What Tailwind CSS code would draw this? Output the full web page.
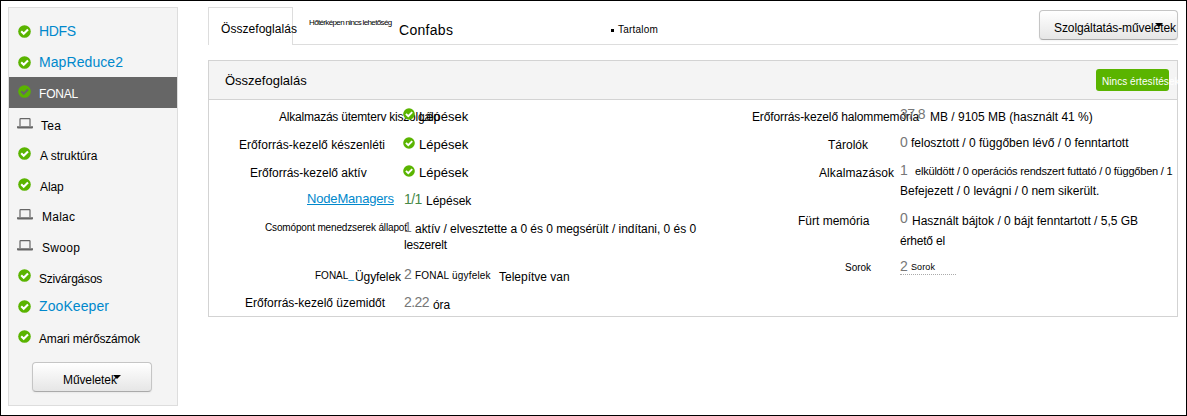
<!DOCTYPE html>
<html lang="hu">
<head>
<meta charset="utf-8">
<title>FONAL – Összefoglalás</title>
<script src="https://cdn.jsdelivr.net/npm/@tailwindcss/browser@4"></script>
</head>
<body class="bg-white">
<svg class="hidden">
  <symbol id="ok" viewBox="0 0 13 13"><circle cx="6.5" cy="6.5" r="6.3" fill="#5ab400"/><path d="M3.2 6.3l2.5 2.5 4.3-4.3" fill="none" stroke="currentColor" stroke-width="2.1"/></symbol>
  <symbol id="pc" viewBox="0 0 16 11"><path d="M3 8V1.2Q3 .6 3.600 .6H12.400Q13 .6 13 1.200V8" fill="#f4f4f4" stroke="#666" stroke-width="1.2"/><path d="M0 8.200H16V9.400Q16 10.400 15 10.400H1Q0 10.400 0 9.400Z" fill="#666"/></symbol>
</svg>
<div class="flex w-[1187px] h-[416px] border border-black pl-[7px] pt-[6px] overflow-hidden font-['Liberation_Sans',sans-serif] text-[12px] leading-[16px] text-black whitespace-nowrap">

  <nav class="w-[170px] h-[399px] shrink-0 border border-[#ddd] bg-[#f4f4f4] pt-2">
    <div class="h-[31px] flex items-start pl-[9px]"><svg class="size-[13px] mt-[9px] text-white"><use href="#ok"/></svg><a class="ml-2 mt-[7px] text-[14px] tracking-[-0.3px] text-[#0088cc]">HDFS</a></div>
    <div class="h-[30px] flex items-start pl-[9px]"><svg class="size-[13px] mt-[9px] text-white"><use href="#ok"/></svg><a class="ml-2 mt-[7px] text-[14px] tracking-[0.08px] text-[#0088cc]">MapReduce2</a></div>
    <div class="h-[31px] flex items-start pl-[9px] bg-[#666]"><svg class="size-[13px] mt-[8px] text-[#666]"><use href="#ok"/></svg><a class="ml-2 mt-[9px] tracking-[-0.2px] text-white">FONAL</a></div>
    <div class="h-[31px] flex items-start pl-2"><svg class="w-4 h-[11px] mt-[10px]"><use href="#pc"/></svg><a class="ml-2 mt-[10px] tracking-[0.3px]">Tea</a></div>
    <div class="h-[31px] flex items-start pl-[9px]"><svg class="size-[13px] mt-[8px] text-white"><use href="#ok"/></svg><a class="ml-[9px] mt-[9px] tracking-[0px]">A struktúra</a></div>
    <div class="h-[30px] flex items-start pl-[9px]"><svg class="size-[13px] mt-[8px] text-white"><use href="#ok"/></svg><a class="ml-[9px] mt-[9px] tracking-[-0.1px]">Alap</a></div>
    <div class="h-[31px] flex items-start pl-2"><svg class="w-4 h-[11px] mt-[9px]"><use href="#pc"/></svg><a class="ml-[9px] mt-[9px] tracking-[0.25px]">Malac</a></div>
    <div class="h-[31px] flex items-start pl-2"><svg class="w-4 h-[11px] mt-[9px]"><use href="#pc"/></svg><a class="ml-[9px] mt-[9px] tracking-[0.3px]">Swoop</a></div>
    <div class="h-[30px] flex items-start pl-[9px]"><svg class="size-[13px] mt-[7px] text-white"><use href="#ok"/></svg><a class="ml-2 mt-[9px] tracking-[-0.2px]">Szivárgásos</a></div>
    <div class="h-[30px] flex items-start pl-[9px]"><svg class="size-[13px] mt-[8px] text-white"><use href="#ok"/></svg><a class="ml-2 mt-[6px] text-[14px] tracking-[0.09px] text-[#0088cc]">ZooKeeper</a></div>
    <div class="h-[40px] flex items-start pl-[9px]"><svg class="size-[13px] mt-[8px] text-white"><use href="#ok"/></svg><a class="ml-2 mt-[9px] tracking-[-0.16px]">Amari mérőszámok</a></div>
    <button class="ml-[23px] w-[120px] h-[30px] rounded border border-[#c5c5c5] border-b-[#aaa] bg-linear-to-b from-white to-[#e6e6e6] flex items-start pl-[30px] shadow-xs">
      <span class="mt-[9px] tracking-[-0.1px]">Műveletek</span><svg class="w-2 h-1 -ml-[4px] mt-[12px]" viewBox="0 0 8 4"><path d="M0 0H8L4 4Z"/></svg>
    </button>
  </nav>

  <main class="ml-[30px] w-[970px] shrink-0">
    <div class="h-[38px] flex items-start">
      <div class="w-[85px] h-[38px] shrink-0 border border-b-0 border-[#ddd] pl-[12px] pt-[13px] tracking-[0.05px]">Összefoglalás</div>
      <div class="w-[885px] h-[38px] border-b border-[#ddd] flex items-start">
        <span class="ml-4 mt-[8px] w-[90px] text-[8px] tracking-[-0.64px]">Hőtérképen nincs lehetőség</span>
        <span class="mt-[15px] w-[212px] text-[14px] tracking-[0.3px]">Confabs</span>
        <span class="mt-[15px] w-[428px] text-[10px] tracking-[0.2px] flex items-center"><i class="size-[3px] bg-black mr-1"></i>Tartalom</span>
        <button class="mt-[3px] w-[139px] h-[30px] shrink-0 rounded border border-[#c5c5c5] border-b-[#aaa] bg-linear-to-b from-white to-[#e6e6e6] flex items-start pl-[14px] shadow-xs">
          <span class="mt-[9px] tracking-[-0.1px]">Szolgáltatás-műveletek</span><svg class="w-2 h-1 shrink-0 -ml-[21px] mt-[12px]" viewBox="0 0 8 4"><path d="M0 0H8L4 4Z"/></svg>
        </button>
      </div>
    </div>

    <section class="mt-[15px] h-[257px] border border-[#d3d3d3]">
      <header class="h-[39px] border-b border-[#d3d3d3] bg-[#f4f4f4] flex items-start justify-between pl-4 pr-2">
        <h2 class="mt-[12px] text-[13px]">Összefoglalás</h2>
        <span class="mt-[8px] w-[73px] h-[22px] rounded-[3px] bg-[#5ab400] pl-[6px] pt-[5px] text-[10px] tracking-[0.05px] text-white">Nincs értesítések</span>
      </header>

      <div class="flex pt-[3px]">
        <div class="w-[491px]">
          <div class="h-7 flex items-start"><span class="w-[194px] shrink-0 pl-[70px] mt-[6px] tracking-[-0.22px]">Alkalmazás ütemterv kiszolgáló</span><svg class="size-[12px] shrink-0 mt-[5px] text-white"><use href="#ok"/></svg><span class="ml-1 mt-[6px] text-[13px]">Lépések</span></div>
          <div class="h-7 flex items-start"><span class="w-[194px] shrink-0 pl-[30px] mt-[6px] tracking-[0.05px]">Erőforrás-kezelő készenléti</span><svg class="size-[12px] mt-[6px] text-white"><use href="#ok"/></svg><span class="ml-1 mt-[6px] text-[13px]">Lépések</span></div>
          <div class="h-7 flex items-start"><span class="w-[194px] shrink-0 pl-[41px] mt-[6px]">Erőforrás-kezelő aktív</span><svg class="size-[12px] mt-[6px] text-white"><use href="#ok"/></svg><span class="ml-1 mt-[6px] text-[13px]">Lépések</span></div>
          <div class="h-[28px] flex items-start"><a class="w-[195px] shrink-0 pl-[98px] mt-[4px] text-[13px] tracking-[-0.17px] text-[#0088cc] underline">NodeManagers</a><span class="w-[22px] mt-[4px] text-[14px] tracking-[-0.6px] text-[#468847]">1/1</span><span class="mt-[6px]">Lépések</span></div>
          <div class="h-[49px] flex items-start"><span class="w-[195px] shrink-0 pl-[56px] mt-[5px] text-[10px] tracking-[-0.15px]">Csomópont menedzserek állapot</span><span class="w-[11px] shrink-0 mt-[4px] text-[14px] text-[#777]">1</span><p class="mt-[6px] tracking-[-0.03px]">aktív / elvesztette a 0 és 0 megsérült / indítani, 0 és 0<br><span class="-ml-[11px] tracking-[-0.2px]">leszerelt</span></p></div>
          <div class="h-[28px] flex items-start"><span class="w-[146px] shrink-0 pl-[106px] mt-[4px] text-[10px]">FONAL<span class="text-[#0088cc]">_</span></span><span class="w-[49px] mt-[5px] tracking-[-0.1px]">Ügyfelek</span><span class="w-[11px] mt-[2px] text-[14px] text-[#777]">2</span><span class="w-[84px] mt-[4px] text-[10px] tracking-[0.2px]">FONAL ügyfelek</span><span class="mt-[5px]">Telepítve van</span></div>
          <div class="h-[22px] flex items-start"><span class="w-[195px] shrink-0 pl-[36px] mt-[3px]">Erőforrás-kezelő üzemidőt</span><span class="w-[29px] mt-[2px] text-[14px] tracking-[-0.6px] text-[#777]">2.22</span><span class="mt-[5px] tracking-[-0.1px]">óra</span></div>
        </div>

        <div class="w-[477px]">
          <div class="h-7 flex items-start"><span class="w-[200px] shrink-0 pl-[52px] mt-[6px] tracking-[-0.13px]">Erőforrás-kezelő halommemória</span><span class="w-[30px] shrink-0 mt-[3px] text-[14px] tracking-[-0.6px] text-[#777]">37.8</span><span class="mt-[6px]">MB / 9105 MB (használt 41 %)</span></div>
          <div class="h-7 flex items-start"><span class="w-[200px] shrink-0 pl-[128px] mt-[6px]">Tárolók</span><span class="w-[11px] mt-[3px] text-[14px] text-[#777]">0</span><span class="mt-[4px]">felosztott / 0 függőben lévő / 0 fenntartott</span></div>
          <div class="h-[49px] flex items-start"><span class="w-[200px] shrink-0 pl-[119px] mt-[6px] tracking-[0.09px]">Alkalmazások</span><span class="w-[15px] shrink-0 mt-[3px] text-[14px] text-[#777]">1</span><p class="mt-[3px] text-[11px] leading-[18px] tracking-[-0.2px]">elküldött / 0 operációs rendszert futtató / 0 függőben / 1<br><span class="-ml-[15px] text-[12px] leading-[22px] tracking-[0px]">Befejezett / 0 levágni / 0 nem sikerült.</span></p></div>
          <div class="h-[47px] flex items-start"><span class="w-[200px] shrink-0 pl-[98px] mt-[5px]">Fürt memória</span><span class="w-[12px] mt-[2px] text-[14px] text-[#777]">0</span><p class="mt-[3px] leading-[20px]">Használt bájtok / 0 bájt fenntartott / 5,5 GB<br><span class="-ml-[12px] tracking-[-0.2px]">érhető el</span></p></div>
          <div class="flex items-start"><span class="w-[200px] shrink-0 pl-[145px] mt-[5px] text-[10px]">Sorok</span><div class="w-[56px] h-[20px] flex items-start border-b border-dotted border-[#aaa]"><span class="w-[11px] mt-[3px] text-[14px] text-[#777]">2</span><span class="mt-[4px] text-[9px] tracking-[0.12px]">Sorok</span></div></div>
        </div>
      </div>
    </section>
  </main>
</div>
</body>
</html>
